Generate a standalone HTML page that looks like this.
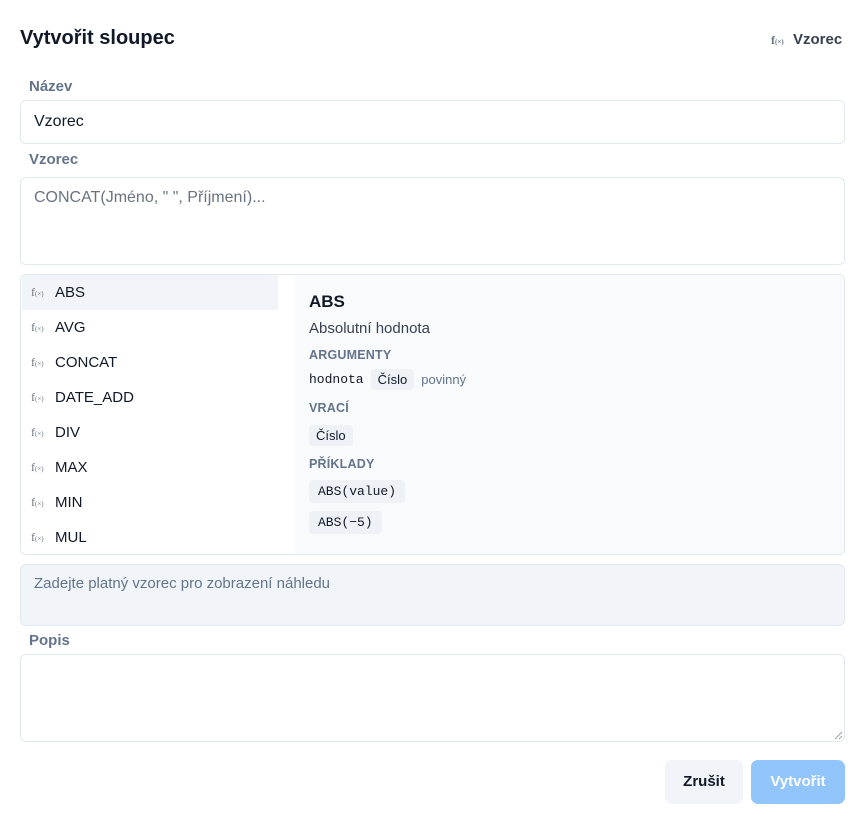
<!DOCTYPE html>
<html><head><meta charset="utf-8"><style>
*{box-sizing:border-box;margin:0;padding:0}
body{width:867px;height:823px;background:#fff;font-family:"Liberation Sans",sans-serif;color:#111827;position:relative;overflow:hidden}
.a{position:absolute}
.lbl{font-size:15px;font-weight:bold;color:#64748b}
.box{border:1px solid #e2e8f0;border-radius:6px;background:#fff}
.fx{font-family:"Liberation Serif",serif;font-size:12px;color:#6b7280}
.fx small{font-size:7px}
.item{position:absolute;left:1px;width:256px;height:35px;font-size:15px;display:flex;align-items:center;padding-left:9px}
.item .fx{margin-right:9px;width:15px;display:inline-block}
.cap{font-size:12.5px;font-weight:bold;color:#64748b;letter-spacing:.2px}
.mono{font-family:"Liberation Mono",monospace;font-size:13px}
.chip{background:#eef2f7;border-radius:4px;padding:3px 7px;font-size:13px}
</style></head><body>
<div class="a" style="left:20px;top:27px;font-size:20px;font-weight:bold">Vytvořit sloupec</div>
<div class="a" style="left:771px;top:31px;font-size:15px;font-weight:bold;color:#374151"><span class="fx" style="display:inline-block;width:22px">f<small>(×)</small></span>Vzorec</div>
<div class="a lbl" style="left:29px;top:78px">Název</div>
<div class="a box" style="left:20px;top:100px;width:825px;height:44px;padding:12px 13px;font-size:16px">Vzorec</div>
<div class="a lbl" style="left:29px;top:151px">Vzorec</div>
<div class="a box" style="left:20px;top:177px;width:825px;height:88px;padding:11px 13px;font-size:16px;color:#6b7280">CONCAT(Jméno, " ", Příjmení)...</div>
<div class="a box" style="left:20px;top:274px;width:825px;height:281px;overflow:hidden">
 <div class="a" style="left:274px;top:0;width:551px;height:281px;background:#f8fafc"></div>
 <div class="item" style="top:0;background:#f1f5f9"><span class="fx">f<small>(×)</small></span>ABS</div>
 <div class="item" style="top:35px"><span class="fx">f<small>(×)</small></span>AVG</div>
 <div class="item" style="top:70px"><span class="fx">f<small>(×)</small></span>CONCAT</div>
 <div class="item" style="top:105px"><span class="fx">f<small>(×)</small></span>DATE_ADD</div>
 <div class="item" style="top:140px"><span class="fx">f<small>(×)</small></span>DIV</div>
 <div class="item" style="top:175px"><span class="fx">f<small>(×)</small></span>MAX</div>
 <div class="item" style="top:210px"><span class="fx">f<small>(×)</small></span>MIN</div>
 <div class="item" style="top:245px"><span class="fx">f<small>(×)</small></span>MUL</div>
 <div class="a" style="left:288px;top:17px;font-size:17px;font-weight:bold">ABS</div>
 <div class="a" style="left:288px;top:45px;font-size:15px;color:#374151">Absolutní hodnota</div>
 <div class="a cap" style="left:288px;top:73px">ARGUMENTY</div>
 <div class="a" style="left:288px;top:94px;display:flex;align-items:center"><span class="mono">hodnota</span><span class="chip" style="margin-left:7px">Číslo</span><span style="font-size:13px;color:#64748b;margin-left:7px">povinný</span></div>
 <div class="a cap" style="left:288px;top:126px">VRACÍ</div>
 <div class="a chip" style="left:288px;top:150px">Číslo</div>
 <div class="a cap" style="left:288px;top:182px">PŘÍKLADY</div>
 <div class="a chip mono" style="left:288px;top:205px;padding:4px 9px;font-size:13px">ABS(value)</div>
 <div class="a chip mono" style="left:288px;top:236px;padding:4px 9px;font-size:13px">ABS(−5)</div>
</div>
<div class="a" style="left:20px;top:564px;width:825px;height:62px;background:#f1f5f9;border:1px solid #e2e8f0;border-radius:6px;padding:10px 13px;font-size:15px;color:#64748b">Zadejte platný vzorec pro zobrazení náhledu</div>
<div class="a lbl" style="left:29px;top:632px">Popis</div>
<div class="a box" style="left:20px;top:654px;width:825px;height:88px"></div>
<svg class="a" style="left:834px;top:731px" width="9" height="9"><path d="M1 8L8 1M5 8L8 5" stroke="#9ca3af" stroke-width="1"/></svg>
<div class="a" style="left:665px;top:760px;width:78px;height:44px;background:#f1f5f9;border-radius:7px;font-size:15px;font-weight:bold;text-align:center;line-height:44px">Zrušit</div>
<div class="a" style="left:751px;top:760px;width:94px;height:44px;background:#93c5fd;border-radius:7px;font-size:15px;font-weight:bold;color:#fff;text-align:center;line-height:44px">Vytvořit</div>
</body></html>
